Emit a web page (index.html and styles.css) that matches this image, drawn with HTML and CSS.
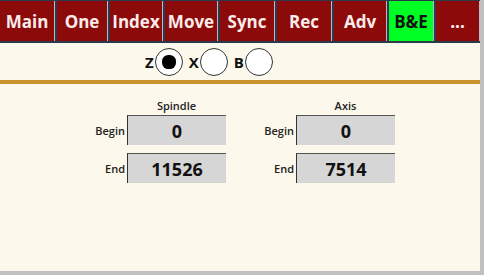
FILE: index.html
```html
<!DOCTYPE html>
<html lang="en">
<head>
    <meta charset="UTF-8">
    <meta name="viewport" content="width=device-width, initial-scale=1.0">
    <title>B&amp;E</title>
    <link rel="stylesheet" href="styles.css">
</head>
<body>
    <div class="panel">
        <div class="nav">
            <button class="tab">Main</button>
            <button class="tab">One</button>
            <button class="tab">Index</button>
            <button class="tab">Move</button>
            <button class="tab">Sync</button>
            <button class="tab">Rec</button>
            <button class="tab">Adv</button>
            <button class="tab active">B&amp;E</button>
            <button class="tab">...</button>
        </div>

        <div class="axis-select">
            <label class="axis-option">Z<span class="radio checked"></span></label>
            <label class="axis-option">X<span class="radio"></span></label>
            <label class="axis-option">B<span class="radio"></span></label>
        </div>

        <div class="rule"></div>

        <div class="fields">
            <div class="group">
                <div class="group-title">Spindle</div>
                <span class="field-label">Begin</span>
                <div class="value">0</div>
                <span class="field-label">End</span>
                <div class="value">11526</div>
            </div>
            <div class="group">
                <div class="group-title">Axis</div>
                <span class="field-label">Begin</span>
                <div class="value">0</div>
                <span class="field-label">End</span>
                <div class="value">7514</div>
            </div>
        </div>
    </div>
</body>
</html>
```
FILE: styles.css
```css
body {
    margin: 0;
    background: #c0c0c0;
    font-family: "Open Sans", "DejaVu Sans", sans-serif;
}

.panel {
    width: 480px;
    height: 271px;
    background: #fdf8ec;
    overflow: hidden;
}

.nav {
    display: grid;
    grid-template-columns: 55px 51px 53px 53px 55px 55px 53px 45px 1fr;
    gap: 2px;
    background: #2d3a4c;
    padding: 1px 0 2px 0;
}

.tab {
    height: 40px;
    border: none;
    border-right: 1px solid #b9b9c9;
    background: #8c0a0a;
    color: #fbecea;
    font-family: "Open Sans", "DejaVu Sans", sans-serif;
    font-weight: bold;
    font-size: 17px;
    padding: 0;
}

.tab.active {
    background: #00ff24;
    color: #111;
}

.axis-select {
    display: flex;
    gap: 6px;
    height: 37px;
    align-items: center;
    padding-left: 145px;
}

.axis-option {
    display: flex;
    align-items: center;
    gap: 1px;
    font-weight: bold;
    font-size: 15px;
    color: #111;
}

.radio {
    width: 26px;
    height: 26px;
    border: 1px solid #333;
    border-radius: 50%;
    background: #fff;
    display: flex;
    align-items: center;
    justify-content: center;
}

.radio.checked::after {
    content: "";
    width: 14px;
    height: 14px;
    border-radius: 45%;
    background: #000;
}

.rule {
    height: 4px;
    background: #c9922c;
}

.fields {
    display: flex;
    gap: 24px;
    padding: 14px 0 0 81px;
}

.group {
    display: grid;
    grid-template-columns: 44px 99px;
    column-gap: 2px;
    row-gap: 8px;
    align-items: center;
}

.group-title {
    grid-column: 2;
    text-align: center;
    font-size: 11px;
    font-weight: 600;
    color: #222;
    margin-bottom: -6px;
}

.field-label {
    text-align: right;
    font-size: 11px;
    font-weight: 600;
    color: #222;
}

.value {
    height: 29px;
    background: #d6d6d6;
    border-left: 1px solid #333;
    border-top: 1px solid #555;
    display: flex;
    align-items: center;
    justify-content: center;
    font-weight: bold;
    font-size: 18px;
    color: #111;
}
```
